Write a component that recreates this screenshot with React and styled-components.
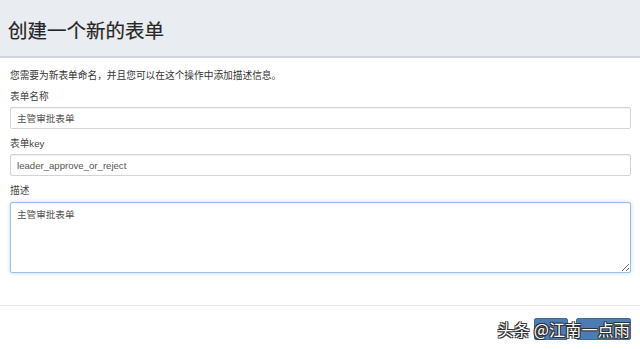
import React from 'react'
import styled, { createGlobalStyle } from 'styled-components'

const GlobalStyle = createGlobalStyle`
    body {
        margin: 0;
        background: #fff;
        font-family: "Liberation Sans", "Noto Sans CJK SC", sans-serif;
        color: #333;
    }
`

function App() {
    return (
        <Page>
            <GlobalStyle />
            <Header>
                <Title>创建一个新的表单</Title>
            </Header>
            <Body>
                <Intro>您需要为新表单命名，并且您可以在这个操作中添加描述信息。</Intro>
                <Label first>表单名称</Label>
                <Input defaultValue="主管审批表单" />
                <Label>表单key</Label>
                <Input defaultValue="leader_approve_or_reject" />
                <Label>描述</Label>
                <TextArea defaultValue="主管审批表单" />
            </Body>
            <Footer>
                <Button aria-label="取消" />
                <Button wide aria-label="保存" />
                <Watermark>头条 @江南一点雨</Watermark>
            </Footer>
        </Page>
    )
}

export default App;

const Page = styled.div`
    width: 640px;
    height: 349px;
    overflow: hidden;
`

const Header = styled.div`
    height: 56px;
    background-color: #e9ecf0;
    border-bottom: 2px solid #d3d6da;
    display: flex;
    align-items: center;
    padding-left: 8px;
`

const Title = styled.h1`
    margin: 0;
    font-size: 19.5px;
    font-weight: 400;
    color: #262626;
    padding-top: 2px;
    -webkit-text-stroke: 0.2px #262626;
`

const Body = styled.div`
    padding: 11px 9px 0 10px;
    display: flex;
    flex-direction: column;
`

const Intro = styled.p`
    margin: 0;
    font-size: 9.7px;
    line-height: 14px;
    color: #333;
`

const Label = styled.label`
    font-size: 9.7px;
    line-height: 14px;
    color: #444;
    margin-top: ${props => props.first ? '7px' : '8px'};
    margin-bottom: 3px;
`

const Input = styled.input`
    box-sizing: border-box;
    height: 22px;
    width: 100%;
    border: 1px solid #d4d4d4;
    border-radius: 2px;
    padding: 0 6px;
    font-family: "Liberation Sans", "Noto Sans CJK SC", sans-serif;
    font-size: 9.6px;
    color: #555;
    box-shadow: inset 0 1px 1px rgba(0, 0, 0, 0.06);
    outline: none;
`

const TextArea = styled.textarea`
    box-sizing: border-box;
    height: 71px;
    width: 100%;
    border: 1px solid #9cc0e4;
    border-radius: 2px;
    padding: 5px 6px;
    font-family: "Liberation Sans", "Noto Sans CJK SC", sans-serif;
    font-size: 9.6px;
    line-height: 13px;
    color: #555;
    box-shadow: inset 0 1px 1px rgba(0, 0, 0, 0.06), 0 0 4px rgba(102, 160, 220, 0.4);
    outline: none;
    resize: vertical;
    margin-top: 1px;
`

const Footer = styled.div`
    position: relative;
    margin-top: 32px;
    border-top: 1px solid #e6e6e6;
    padding: 12px 9px 0 0;
    display: flex;
    justify-content: flex-end;
    gap: 8px;
`

const Button = styled.button`
    height: 22px;
    width: ${props => props.wide ? '55px' : '34px'};
    background-color: #4d7cb3;
    border: 1px solid #3f6b9c;
    border-radius: 2px;
    padding: 0;
`

const Watermark = styled.span`
    position: absolute;
    right: 10px;
    top: 12px;
    font-family: "Noto Sans CJK SC", sans-serif;
    font-size: 16px;
    line-height: 22px;
    color: #fff;
    letter-spacing: 0.2px;
    text-shadow: 0 0 1px #222, 1px 1px 0 #333, -1px -1px 0 #333, 1px -1px 0 #333, -1px 1px 0 #333;
`
